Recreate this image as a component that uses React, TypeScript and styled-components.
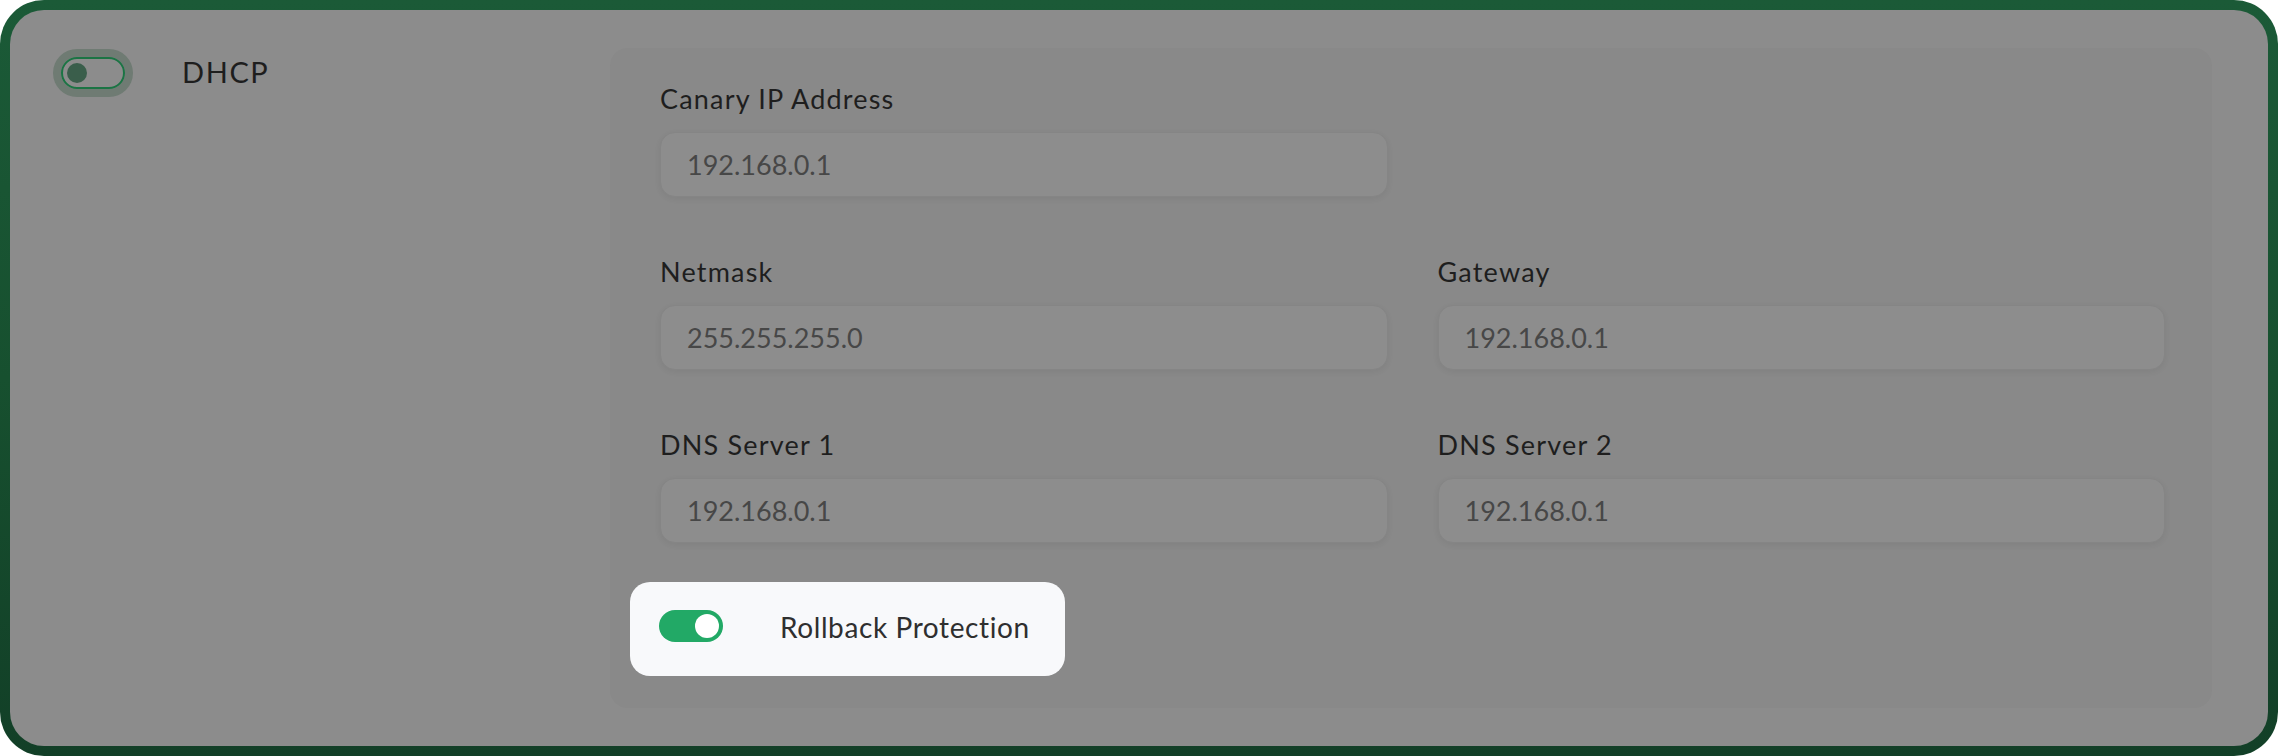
import { FunctionComponent } from 'react';
import styled, { createGlobalStyle } from 'styled-components';

const GlobalStyle = createGlobalStyle`
  html, body {
    margin: 0;
    padding: 0;
    background: #ffffff;
  }
  body {
    font-family: Lato, "Open Sans", "Liberation Sans", sans-serif;
  }
  * {
    box-sizing: border-box;
  }
`;

const Frame = styled.div`
  width: 2278px;
  height: 756px;
  padding: 10px;
  border-radius: 44px;
  background: linear-gradient(180deg, #1b5a37 0%, #17502f 50%, #123f27 100%);
`;

const Screen = styled.div`
  height: 100%;
  display: flex;
  padding: 38px 56px 38px 51px;
  border-radius: 34px;
  background: #8c8c8c;
`;

const Sidebar = styled.div`
  width: 549px;
  flex-shrink: 0;
  display: flex;
  align-items: flex-start;
  gap: 57px;
  padding-top: 9px;
`;

const SidebarLabel = styled.span`
  font-size: 29px;
  line-height: 32px;
  letter-spacing: 1.6px;
  color: #1e1e1e;
  margin-top: -1px;
`;

const Track = styled.div<{ $on?: boolean; $focused?: boolean }>`
  position: relative;
  width: 64px;
  height: 32px;
  flex-shrink: 0;
  border-radius: 16px;
  background: ${(p) => (p.$on ? '#22a966' : 'transparent')};
  border: ${(p) => (p.$on ? 'none' : '2px solid #1b7444')};
  box-shadow: ${(p) => (p.$focused ? '0 0 0 8px #6f7b73' : 'none')};
`;

const Knob = styled.span<{ $on?: boolean }>`
  position: absolute;
  top: 50%;
  transform: translateY(-50%);
  border-radius: 50%;
  ${(p) =>
    p.$on
      ? `right: 4px; width: 24px; height: 24px; background: #ffffff;`
      : `left: 4px; width: 20px; height: 20px; background: #3a5e4b;`}
`;

const Panel = styled.section`
  flex: 1;
  padding: 35px 47px 0 50px;
  border-radius: 18px;
  background: #898989;
`;

const Grid = styled.div`
  display: grid;
  grid-template-columns: 1fr 1fr;
  column-gap: 50px;
  row-gap: 59px;
`;

const Field = styled.label<{ $col?: number }>`
  display: flex;
  flex-direction: column;
  gap: 17px;
  grid-column: ${(p) => p.$col ?? 'auto'};
`;

const FieldLabel = styled.span`
  font-size: 27px;
  line-height: 32px;
  letter-spacing: 1.2px;
  color: #1e1e1e;
`;

const Input = styled.input`
  height: 65px;
  width: 100%;
  padding: 0 26px;
  border: 1px solid #858585;
  border-radius: 15px;
  background: #8d8d8d;
  box-shadow: 0 2px 6px rgba(0, 0, 0, 0.06);
  font-family: Lato, "Open Sans", "Liberation Sans", sans-serif;
  font-size: 27px;
  color: #474747;
  outline: none;
`;

const Spotlight = styled.div`
  display: inline-flex;
  align-items: center;
  gap: 57px;
  margin: 39px 0 0 -30px;
  padding: 27px 35px 33px 29px;
  border-radius: 20px;
  background: #f8f9fb;
`;

const SpotlightText = styled.span`
  font-size: 28px;
  line-height: 32px;
  letter-spacing: 0.6px;
  color: #2f2f2f;
  margin-top: 2px;
`;

interface ToggleProps {
  on?: boolean;
  focused?: boolean;
}

const Toggle: FunctionComponent<ToggleProps> = ({ on, focused }) => (
  <Track $on={on} $focused={focused}>
    <Knob $on={on} />
  </Track>
);

const fields = [
  { label: 'Canary IP Address', value: '192.168.0.1', col: 1 },
  { label: 'Netmask', value: '255.255.255.0', col: 1 },
  { label: 'Gateway', value: '192.168.0.1', col: 2 },
  { label: 'DNS Server 1', value: '192.168.0.1', col: 1 },
  { label: 'DNS Server 2', value: '192.168.0.1', col: 2 },
];

export default function App() {
  return (
    <>
      <GlobalStyle />
      <Frame>
        <Screen>
          <Sidebar>
            <Toggle focused />
            <SidebarLabel>DHCP</SidebarLabel>
          </Sidebar>
          <Panel>
            <Grid>
              {fields.map((f) => (
                <Field key={f.label} $col={f.col}>
                  <FieldLabel>{f.label}</FieldLabel>
                  <Input readOnly defaultValue={f.value} />
                </Field>
              ))}
            </Grid>
            <Spotlight>
              <Toggle on />
              <SpotlightText>Rollback Protection</SpotlightText>
            </Spotlight>
          </Panel>
        </Screen>
      </Frame>
    </>
  );
}
